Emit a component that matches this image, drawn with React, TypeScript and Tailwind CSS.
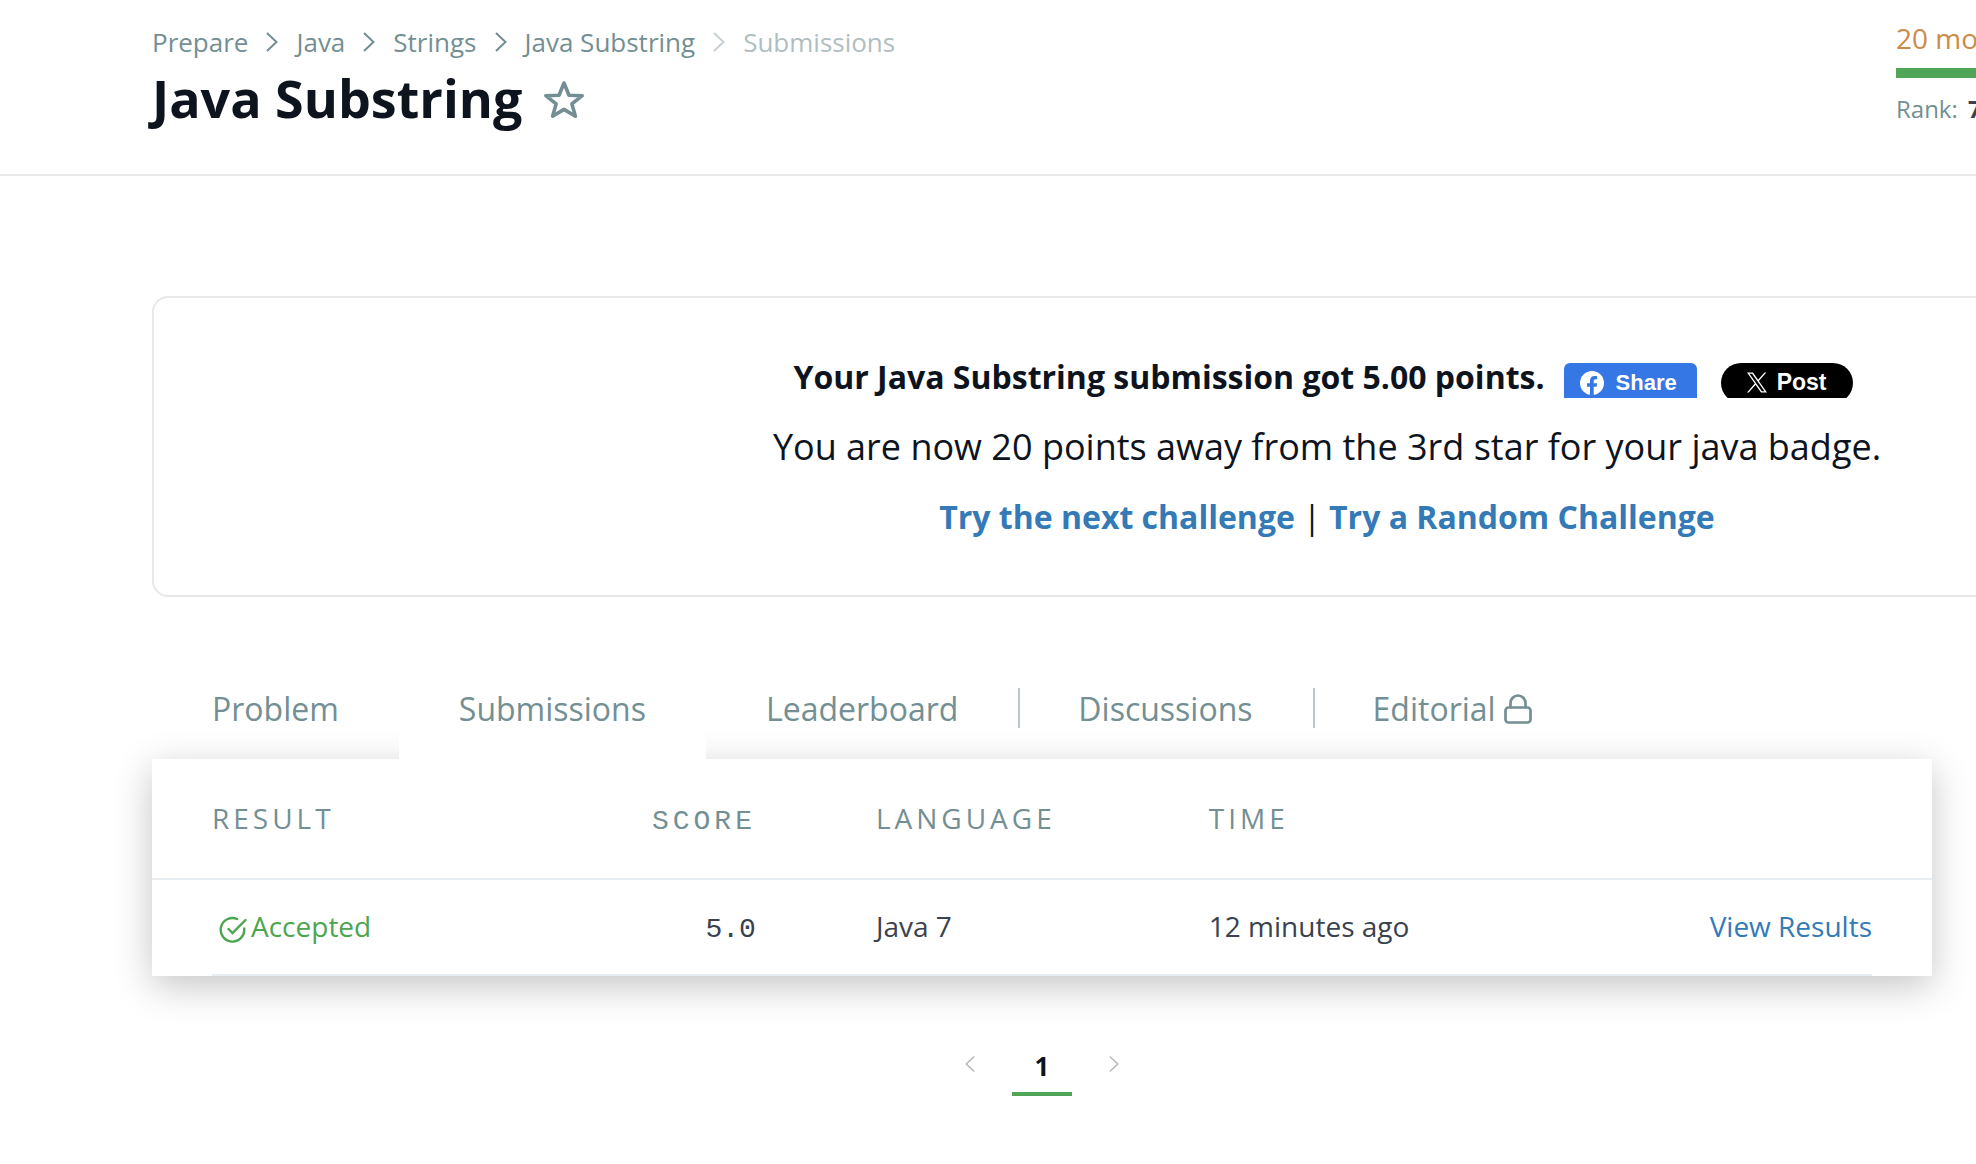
import React from "react";

const crumbs = ["Prepare", "Java", "Strings", "Java Substring"];

function Chevron({ className }: { className: string }) {
  return (
    <svg className={className} viewBox="0 0 12 20" fill="none" stroke="currentColor" strokeWidth="2" aria-hidden="true">
      <path d="M1 1l9.5 9L1 19" />
    </svg>
  );
}

function StarIcon() {
  return (
    <svg className="h-10 w-[42px]" viewBox="0 0 42 40" fill="none" stroke="currentColor" strokeWidth="3.6" strokeLinejoin="round" aria-hidden="true">
      <path d="M21 4l5 12.2 13.2.5-10.3 8.2 3.5 12.3L21 30.4 9.6 37.2l3.5-12.3L2.8 16.7l13.2-.5z" />
    </svg>
  );
}

function LockIcon() {
  return (
    <svg className="h-8 w-7" viewBox="0 0 28 32" fill="none" stroke="currentColor" strokeWidth="2.7" aria-hidden="true">
      <rect x="1.5" y="14.5" width="25" height="15" rx="3" />
      <path d="M6.5 14.5V10a7.5 7.5 0 0 1 15 0v4.5" />
    </svg>
  );
}

function AcceptedIcon() {
  return (
    <svg className="mt-2 h-7 w-7 self-center" viewBox="0 0 28 28" fill="none" stroke="currentColor" strokeWidth="2.4" strokeLinecap="round" aria-hidden="true">
      <path d="M18.2 3A11.800 11.800 0 1 0 25.200 12.500" />
      <path d="M9.500 13l4 4L26.500 4" />
    </svg>
  );
}

function FacebookIcon() {
  return (
    <svg className="h-6 w-6" viewBox="0 0 24 24" aria-hidden="true">
      <circle cx="12" cy="12" r="12" fill="#fff" />
      <path fill="#3578e5" d="M10 24v-8.3H7v-3.5h3V9.7c0-3 1.800-4.700 4.500-4.700 1.300 0 2.700.2 2.700.2v3h-1.500c-1.500 0-2 .9-2 1.900v2.100h3.400l-.5 3.500h-2.900V24z" />
    </svg>
  );
}

function XIcon() {
  return (
    <svg className="h-[21px] w-5" viewBox="0 0 24 24" fill="#fff" aria-hidden="true">
      <path d="M14.258 10.152 23.176 0h-2.113l-7.747 8.813L7.133 0H0l9.352 13.328L0 23.973h2.113l8.176-9.309 6.531 9.309h7.133zm-2.895 3.293-.949-1.328L2.875 1.56h3.246l6.086 8.523.945 1.328 7.91 11.078h-3.246z" />
    </svg>
  );
}

function Tab({ label, active, divided, children }: { label: string; active?: boolean; divided?: boolean; children?: React.ReactNode }) {
  return (
    <div className="flex items-start">
      <a href="#" className={active ? "relative z-10 flex h-20 items-start gap-2 bg-white px-15" : "flex h-20 items-start gap-2 px-15"}>
        <span>{label}</span>
        {children}
      </a>
      {divided && <span className="-mr-0.5 mt-[9px] h-10 w-0.5 bg-[#b7c9cc]" />}
    </div>
  );
}

export default function App() {
  return (
    <div className="min-h-screen overflow-hidden bg-white font-['Open_Sans',sans-serif] text-[#0e141e]">
      <header className="flex justify-between border-b-2 border-[#e7e8e8] pb-10 pl-[152px] pt-6">
        <div>
          <nav aria-label="Breadcrumb" className="flex items-center text-[26px] leading-9 text-[#738f93]">
            {crumbs.map((crumb, i) => (
              <React.Fragment key={crumb}>
                <a href="#">{crumb}</a>
                <Chevron className={i === crumbs.length - 1 ? "mx-[18px] h-5 w-3 text-[#c7d1d4]" : "mx-[18px] h-5 w-3"} />
              </React.Fragment>
            ))}
            <span className="text-[#b0bec1]">Submissions</span>
          </nav>
          <div className="mt-0.5 flex items-center gap-[21px]">
            <h1 className="text-[52px] font-bold leading-[72px]">Java Substring</h1>
            <button type="button" aria-label="Bookmark" className="pt-0.5 text-[#738f93]">
              <StarIcon />
            </button>
          </div>
        </div>
        <div className="-mt-5 w-20 whitespace-nowrap pt-[15px]">
          <p className="text-[28px] leading-[38px] text-[#cc8b48]">20 more points to get your next star!</p>
          <div className="mt-[11px] h-2.5 w-[480px] bg-[#50a656]" />
          <p className="mt-[15px] text-2xl leading-8 text-[#738f93]">
            Rank: <strong className="ml-1 font-bold text-[#39424e]">788</strong>
          </p>
        </div>
      </header>

      <main className="pl-[152px] pt-[120px]">
        <section className="-mr-[526px] flex flex-col items-center gap-[22px] rounded-2xl border-2 border-[#e7e8e8] pb-[54px] pt-[55px]">
          <div className="flex items-center pr-2">
            <h2 className="text-[32px] font-bold leading-12">Your Java Substring submission got 5.00 points.</h2>
            <div className="ml-[19px] mt-1.5 flex h-[35px] items-start gap-6 overflow-hidden font-['Liberation_Sans',sans-serif] font-bold text-white">
              <button type="button" className="flex h-10 w-[133px] items-center gap-3 rounded-md bg-[#3578e5] pl-4 text-[22px]">
                <FacebookIcon />
                Share
              </button>
              <button type="button" className="flex h-10 w-[132px] items-center justify-center gap-2.5 rounded-full bg-black text-[23px]">
                <XIcon />
                Post
              </button>
            </div>
          </div>
          <p className="text-4xl leading-12">You are now 20 points away from the 3rd star for your java badge.</p>
          <p className="text-[32px] leading-12">
            <a href="#" className="font-bold text-[#337ab7]">Try the next challenge</a>
            {" | "}
            <a href="#" className="font-bold text-[#337ab7]">Try a Random Challenge</a>
          </p>
        </section>

        <div className="mr-11 mt-[82px]">
          <nav aria-label="Challenge" className="flex text-[32px] leading-[60px] text-[#738f93]">
            <Tab label="Problem" />
            <Tab label="Submissions" active />
            <Tab label="Leaderboard" divided />
            <Tab label="Discussions" divided />
            <Tab label="Editorial">
              <span className="flex h-[60px] items-center">
                <LockIcon />
              </span>
            </Tab>
          </nav>

          <div className="bg-white shadow-[0_10px_36px_rgba(0,0,0,0.23)]">
            <table className="w-full table-fixed text-left text-[28px] leading-10">
              <colgroup>
                <col className="w-[25%]" />
                <col className="w-[12.3%]" />
                <col className="w-[18.7%]" />
                <col className="w-[18.7%]" />
                <col />
              </colgroup>
              <thead>
                <tr className="border-b-2 border-[#e7edf0] align-baseline text-[#738f93]">
                  <th scope="col" className="pb-10 pl-15 pt-[39px] font-normal tracking-[4px]">RESULT</th>
                  <th scope="col" className="pr-15 text-right font-['Liberation_Mono',monospace] font-normal tracking-[4px]">SCORE</th>
                  <th scope="col" className="pl-15 font-normal tracking-[4px]">LANGUAGE</th>
                  <th scope="col" className="pl-15 font-normal tracking-[4px]">TIME</th>
                  <td />
                </tr>
              </thead>
              <tbody>
                <tr className="align-baseline text-[#39424e]">
                  <td className="pb-7 pl-15 pt-[26px]">
                    <span className="flex items-baseline gap-1 pl-[7px] text-[#4ca64f]">
                      <AcceptedIcon />
                      <span>Accepted</span>
                    </span>
                  </td>
                  <td className="pr-15 text-right font-['Liberation_Mono',monospace]">5.0</td>
                  <td className="pl-15">Java 7</td>
                  <td className="pl-15">12 minutes ago</td>
                  <td className="pr-15 text-right">
                    <a href="#" className="text-[#337ab7]">View Results</a>
                  </td>
                </tr>
              </tbody>
            </table>
            <div className="mx-15 h-0.5 bg-[#e7edf0]" />
          </div>

          <nav aria-label="Pagination" className="mt-[72px] flex justify-center text-[26px] font-bold">
            <button type="button" aria-label="Previous page" className="flex h-8 w-[60px] items-center justify-center text-[#b8bcc0]">
              <Chevron className="h-[18px] w-2.5 rotate-180" />
            </button>
            <a href="#" aria-current="page" className="mx-3 w-[60px] border-b-4 border-[#50a656] pb-2 text-center leading-9">1</a>
            <button type="button" aria-label="Next page" className="flex h-8 w-[60px] items-center justify-center text-[#b8bcc0]">
              <Chevron className="h-[18px] w-2.5" />
            </button>
          </nav>
        </div>
      </main>
    </div>
  );
}
